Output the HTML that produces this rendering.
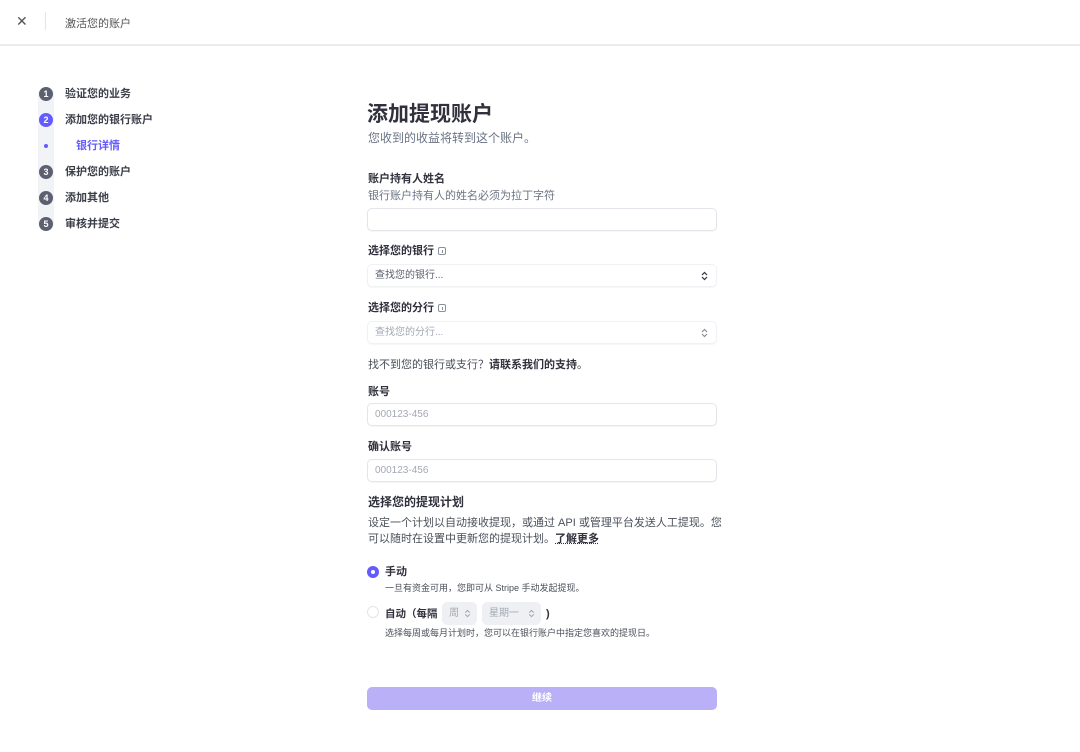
<!DOCTYPE html>
<html><head><meta charset="utf-8"><style>
*{margin:0;padding:0;box-sizing:border-box}
body{width:1080px;height:752px;background:#fff;position:relative;overflow:hidden;font-family:"Liberation Sans","Noto Sans CJK SC",sans-serif;color:#30313d}
.a{position:absolute;white-space:nowrap}
.hdr{position:absolute;left:0;top:0;width:1080px;height:46px;border-bottom:2px solid #ebebef}
.track{position:absolute;left:38px;top:87px;width:16px;height:144px;background:#f2f3f6;border-radius:8px}
.c{position:absolute;left:39px;width:14px;height:14px;border-radius:50%;background:#5d6070;color:#fff;font-size:9px;font-weight:bold;text-align:center;line-height:14px}
.st{position:absolute;left:65px;font-size:11px;font-weight:bold;color:#3c3f4a;line-height:14px}
.lbl{position:absolute;left:368px;font-size:11px;font-weight:bold;color:#30313d;line-height:14px}
.hint{position:absolute;left:368px;font-size:11px;color:#6a7383;line-height:14px}
.inp{position:absolute;left:367px;width:350px;height:23px;border:1px solid #e3e5ea;border-radius:5px;box-shadow:0 1px 1px rgba(0,0,0,.04);background:#fff;font-size:10px;color:#a3a8b3;padding-left:7px;line-height:22px}
.sel{border-color:#f0f1f4}
.chev{position:absolute;right:8px;top:6px;width:7px;height:10px}
.info{display:inline-block;width:8px;height:8px;border:1px solid #8a8f9c;border-radius:2px;margin-left:4px;vertical-align:-1px;position:relative}
.info:after{content:"";position:absolute;left:2.5px;top:1.5px;width:1px;height:3px;background:#8a8f9c}
.pill{position:absolute;top:602px;height:23px;background:#eef0f3;border-radius:5px;font-size:10px;color:#a3a8b3;line-height:23px;padding-left:7px}
</style></head><body>
<div class="hdr"></div>
<div class="a" style="left:16px;top:13px;font-size:14px;color:#555;">✕</div>
<div class="a" style="left:45px;top:12px;width:1px;height:18px;background:#e3e5ea"></div>
<div class="a" style="left:65px;top:15px;font-size:11px;color:#555">激活您的账户</div>

<div class="track"></div>
<div class="c" style="top:87px">1</div><div class="st" style="top:87px">验证您的业务</div>
<div class="c" style="top:113px;background:#635bff">2</div><div class="st" style="top:113px">添加您的银行账户</div>
<div class="a" style="left:44px;top:144px;width:4px;height:4px;border-radius:50%;background:#635bff"></div>
<div class="st" style="top:139px;left:76px;color:#635bff">银行详情</div>
<div class="c" style="top:165px">3</div><div class="st" style="top:165px">保护您的账户</div>
<div class="c" style="top:191px">4</div><div class="st" style="top:191px">添加其他</div>
<div class="c" style="top:217px">5</div><div class="st" style="top:217px">审核并提交</div>

<div class="a" style="left:367px;top:98px;font-size:21px;font-weight:bold;color:#30313d">添加提现账户</div>
<div class="a" style="left:368px;top:129px;font-size:12px;color:#6a7383">您收到的收益将转到这个账户。</div>

<div class="lbl" style="top:172px">账户持有人姓名</div>
<div class="hint" style="top:189px">银行账户持有人的姓名必须为拉丁字符</div>
<div class="inp" style="top:208px"></div>

<div class="lbl" style="top:244px">选择您的银行<span class="info"></span></div>
<div class="inp sel" style="top:264px;color:#5a5f6b">查找您的银行...<svg class="chev" viewBox="0 0 7 10"><path d="M1 4L3.5 1.5 6 4M1 6l2.5 2.5L6 6" fill="none" stroke="#30313d" stroke-width="1.2"/></svg></div>

<div class="lbl" style="top:301px">选择您的分行<span class="info"></span></div>
<div class="inp sel" style="top:321px">查找您的分行...<svg class="chev" viewBox="0 0 7 10"><path d="M1 4L3.5 1.5 6 4M1 6l2.5 2.5L6 6" fill="none" stroke="#8a8f9c" stroke-width="1.2"/></svg></div>

<div class="hint" style="top:358px;color:#4a4f5a">找不到您的银行或支行？<b style="color:#30313d">请联系我们的支持</b>。</div>

<div class="lbl" style="top:385px">账号</div>
<div class="inp" style="top:403px">000123-456</div>
<div class="lbl" style="top:440px">确认账号</div>
<div class="inp" style="top:459px">000123-456</div>

<div class="lbl" style="top:495px;font-size:12px">选择您的提现计划</div>
<div class="hint" style="top:515px;color:#4a4f5a;line-height:16px">设定一个计划以自动接收提现，或通过 API 或管理平台发送人工提现。您<br>可以随时在设置中更新您的提现计划。<b style="color:#30313d;text-decoration:underline dotted">了解更多</b></div>

<div class="a" style="left:367px;top:566px;width:12px;height:12px;border-radius:50%;background:#635bff"><div style="position:absolute;left:4px;top:4px;width:4px;height:4px;border-radius:50%;background:#fff"></div></div>
<div class="lbl" style="top:565px;left:385px">手动</div>
<div class="a" style="left:385px;top:581px;font-size:9px;color:#4a4f5a">一旦有资金可用，您即可从 Stripe 手动发起提现。</div>

<div class="a" style="left:367px;top:606px;width:12px;height:12px;border-radius:50%;border:1px solid #e3e5ea"></div>
<div class="lbl" style="top:607px;left:385px;font-size:10.5px">自动（每隔</div>
<div class="pill" style="left:442px;width:35px">周<svg style="position:absolute;left:22px;top:7px" width="7" height="9" viewBox="0 0 7 10"><path d="M1 4L3.5 1.5 6 4M1 6l2.5 2.5L6 6" fill="none" stroke="#a3a8b3" stroke-width="1.2"/></svg></div>
<div class="pill" style="left:482px;width:59px">星期一<svg style="position:absolute;left:46px;top:7px" width="7" height="9" viewBox="0 0 7 10"><path d="M1 4L3.5 1.5 6 4M1 6l2.5 2.5L6 6" fill="none" stroke="#a3a8b3" stroke-width="1.2"/></svg></div>
<div class="lbl" style="top:607px;left:546px">)</div>
<div class="a" style="left:385px;top:626px;font-size:9px;color:#4a4f5a">选择每周或每月计划时，您可以在银行账户中指定您喜欢的提现日。</div>

<div class="a" style="left:367px;top:687px;width:350px;height:23px;border-radius:5px;background:#b9b0f7;color:#fff;font-size:10px;font-weight:bold;text-align:center;line-height:23px">继续</div>
</body></html>
